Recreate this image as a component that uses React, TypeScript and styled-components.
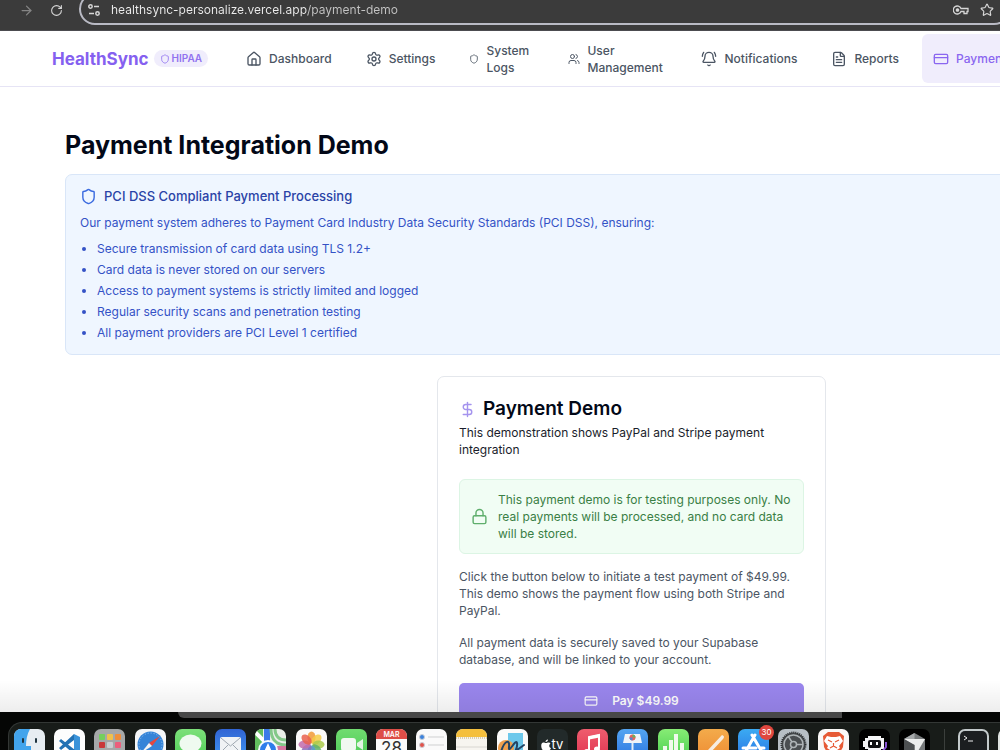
import React from "react";
import styled, { createGlobalStyle } from "styled-components";
import {
  ArrowRight,
  BellRing,
  CreditCard,
  DollarSign,
  FileText,
  House,
  Lock,
  RotateCw,
  Settings,
  Shield,
  Star,
  Users,
} from "lucide-react";

const GlobalStyle = createGlobalStyle`
  *, *::before, *::after { box-sizing: border-box; }
  body {
    margin: 0;
    background: #000;
    color: #020817;
    font-family: Inter, "Liberation Sans", sans-serif;
    font-size: 12px;
    line-height: 17px;
  }
  h1, h2, h3, p, ul { margin: 0; padding: 0; }
  svg { flex: none; display: block; }
`;

const Desktop = styled.div`
  height: 100vh;
  display: flex;
  flex-direction: column;
  overflow: hidden;
`;

/* Browser chrome */
const BrowserBar = styled.div`
  flex: none;
  height: 31px;
  display: flex;
  align-items: flex-end;
  gap: 16px;
  padding: 0 0 5px 19px;
  background: #3b3b3b;
  border-bottom: 1px solid #4c4c50;
  overflow: hidden;
`;

const BarButton = styled.button<{ $dim?: boolean }>`
  flex: none;
  display: flex;
  align-items: center;
  height: 30px;
  padding: 0;
  border: 0;
  background: none;
  color: ${(p) => (p.$dim ? "#858585" : "#d6d6d6")};
`;

const AddressPill = styled.div`
  flex: 1;
  display: flex;
  align-items: center;
  gap: 11px;
  height: 32px;
  margin-right: -10px;
  padding: 2px 14px 0 7px;
  border: 2px solid #b9bac4;
  border-radius: 16px;
  color: #d6d6d6;
`;

/* The host name is brighter than the path that follows it. */
const AddressInput = styled.input`
  flex: 1;
  min-width: 0;
  height: 18px;
  padding: 0;
  border: 0;
  outline: 0;
  background: linear-gradient(90deg, #ededed 197px, #c4c4c4 197px);
  background-clip: text;
  -webkit-background-clip: text;
  color: transparent;
  font: 400 12px/18px Inter, "Liberation Sans", sans-serif;
`;

/* Application */
const Viewport = styled.div`
  position: relative;
  flex: 1;
  min-height: 0;
  overflow: hidden;
  background: #fff;
  &::after {
    content: "";
    position: absolute;
    inset: auto 0 0 0;
    height: 32px;
    background: linear-gradient(rgba(0, 0, 0, 0), rgba(0, 0, 0, 0.07));
    pointer-events: none;
  }
`;

const Header = styled.header`
  display: flex;
  align-items: center;
  height: 56px;
  padding-left: 52px;
  border-bottom: 1px solid #e6e4f5;
`;

const Brand = styled.a`
  flex: none;
  font-size: 17px;
  line-height: 24px;
  font-weight: 700;
  color: #8560f0;
  text-decoration: none;
`;

const HipaaBadge = styled.span`
  flex: none;
  display: flex;
  align-items: center;
  gap: 2px;
  height: 17px;
  margin: 0 27px 0 5px;
  padding: 0 6px;
  border-radius: 9px;
  background: #f0edfc;
  color: #9273f0;
  font-size: 10px;
  font-weight: 600;
`;

const Nav = styled.nav`
  display: flex;
  align-items: center;
  gap: 12px;
`;

const NavLink = styled.a<{ $active?: boolean }>`
  flex: none;
  display: flex;
  align-items: center;
  gap: 7px;
  min-height: 49px;
  padding: 0 11px;
  border-radius: 6px;
  background: ${(p) => (p.$active ? "#f0edfc" : "transparent")};
  color: ${(p) => (p.$active ? "#8a66f0" : "#4b5563")};
  font-weight: 500;
  text-decoration: none;
`;

const NavLabel = styled.span<{ $width?: number }>`
  width: ${(p) => (p.$width ? `${p.$width}px` : "auto")};
`;

/* The content column is wider than the window and runs past its right edge. */
const Main = styled.main`
  margin-right: -263px;
  padding: 42px 65px 0;
`;

const PageTitle = styled.h1`
  font-size: 25px;
  line-height: 32px;
  font-weight: 700;
`;

const Notice = styled.section`
  margin: 13px 0 21px;
  padding: 11px 14px 13px;
  border: 1px solid #d9e6f8;
  border-radius: 7px;
  background: #eff6ff;
  color: #3452c6;
`;

const NoticeTitle = styled.h2`
  display: flex;
  align-items: center;
  gap: 7px;
  padding-bottom: 8px;
  font-size: 13px;
  line-height: 20px;
  font-weight: 500;
  color: #2a43a6;
  svg { color: #3b6be0; }
`;

const NoticeList = styled.ul`
  display: flex;
  flex-direction: column;
  gap: 4px;
  padding: 9px 0 0 17px;
`;

const Card = styled.section`
  width: 389px;
  margin: 0 auto;
  padding: 20px 21px;
  border: 1px solid #e4e7ec;
  border-radius: 7px;
  background: #fff;
`;

const CardTitle = styled.h2`
  display: flex;
  align-items: center;
  gap: 7px;
  padding-bottom: 3px;
  font-size: 19px;
  line-height: 24px;
  font-weight: 600;
  svg { color: #a594ee; }
`;

const CardText = styled.p<{ $strong?: boolean }>`
  padding-bottom: 15px;
  color: ${(p) => (p.$strong ? "#1a1d2b" : "#4b5563")};
`;

const TestAlert = styled.div`
  display: flex;
  align-items: center;
  gap: 10px;
  margin: 6px 0 14px;
  padding: 11px;
  border: 1px solid #dcf5e4;
  border-radius: 6px;
  background: #f1fdf4;
  color: #3a7f45;
  svg { color: #5fae6c; }
`;

const PayButton = styled.button`
  display: flex;
  align-items: center;
  justify-content: center;
  gap: 14px;
  width: 100%;
  height: 35px;
  border: 0;
  border-radius: 5px;
  background: #9a86ee;
  color: #fff;
  font: 600 12px/17px Inter, "Liberation Sans", sans-serif;
`;

/* Desktop edge and dock */
const DockArea = styled.footer`
  flex: none;
  height: 38px;
  overflow: hidden;
  background: #050605;
`;

const WindowEdge = styled.div`
  height: 6px;
  margin: 0 158px 4px 178px;
  border-radius: 0 0 0 6px;
  background: #484848;
`;

const Dock = styled.div`
  display: flex;
  height: 60px;
  margin-left: 8px;
  padding: 6px 0 0 5px;
  border: 1px solid #333735;
  border-right: 0;
  border-radius: 14px 0 0 0;
  background: #181c19;
`;

const DockApps = styled.div`
  flex: 1;
  display: flex;
  justify-content: space-between;
`;

const DockTail = styled.div`
  flex: none;
  display: flex;
  gap: 9px;
  width: 56px;
  margin-left: 14px;
  padding-left: 13px;
  border-left: 1px solid #3b3f3c;
`;

const AppTile = styled.div<{ $bg: string }>`
  position: relative;
  flex: none;
  width: 31px;
  height: 31px;
  border-radius: 7px;
  background: ${(p) => p.$bg};
  > svg { width: 31px; height: 31px; border-radius: 7px; }
`;

const CountBadge = styled.span`
  position: absolute;
  top: -4px;
  right: -5px;
  width: 15px;
  height: 15px;
  border-radius: 50%;
  background: #e0473f;
  color: #fff;
  font-size: 8px;
  line-height: 15px;
  text-align: center;
`;

const CalendarFace = styled.div`
  overflow: hidden;
  height: 31px;
  border-radius: 7px;
  color: #333;
  font-size: 17px;
  line-height: 18px;
  text-align: center;
`;

const CalendarMonth = styled.div`
  height: 10px;
  background: #dd4e48;
  color: #fff;
  font-size: 7px;
  line-height: 11px;
  font-weight: 600;
`;

const TvLabel = styled.div`
  display: flex;
  align-items: center;
  justify-content: center;
  height: 31px;
  color: #fff;
  font-size: 13px;
  > svg { width: 10px; height: 12px; }
`;

const Art = ({ children }: { children: React.ReactNode }) => (
  <svg viewBox="0 0 31 31" fill="none" aria-hidden="true">
    {children}
  </svg>
);

const petals = ["#f19a37", "#f4cb45", "#a9c94b", "#62b26b", "#5b9bd0", "#8670bd", "#c26bac", "#e9604e"];

const apps: { name: string; bg: string; face: React.ReactNode; count?: number }[] = [
  {
    name: "Finder",
    bg: "#e7edf2",
    face: (
      <Art>
        <path d="M0 0h16c-3 5-4 11-4 17h5v14H0z" fill="#42a4ec" />
        <path d="M9 10v3M22 10v3" stroke="#20343f" strokeWidth="2" strokeLinecap="round" />
      </Art>
    ),
  },
  {
    name: "VS Code",
    bg: "#fdfdfd",
    face: (
      <Art>
        <path d="M20 5l6 3v16l-6 3z" fill="#3a93da" />
        <path d="M5 12l2-2 14 11v5zM5 19l15-14v6L7 21z" fill="#2372b4" />
      </Art>
    ),
  },
  {
    name: "Launchpad",
    bg: "#a5a7a8",
    face: (
      <Art>
        {["#74cf5d", "#f0c14c", "#ee8d3b", "#c9373a", "#c9cdd0", "#ec5e7c", "#6187cc", "#a56bc0", "#58b8d8"].map((c, i) => (
          <rect key={c} x={5 + (i % 3) * 8} y={5 + Math.floor(i / 3) * 8} width="6" height="6" rx="1" fill={c} />
        ))}
      </Art>
    ),
  },
  {
    name: "Safari",
    bg: "#f5f6f7",
    face: (
      <Art>
        <circle cx="15.500" cy="15.500" r="13" fill="#3584d8" />
        <circle cx="15.500" cy="15.500" r="11.500" stroke="#9cc8f2" strokeDasharray="1 2" />
        <path d="M25 7L14 14l3 3z" fill="#e4473e" />
        <path d="M6 24l8-10 3 3z" fill="#f4f4f4" />
      </Art>
    ),
  },
  {
    name: "Messages",
    bg: "linear-gradient(#7de07a, #4fce57)",
    face: (
      <Art>
        <ellipse cx="15.500" cy="14.500" rx="11" ry="9" fill="#effaf0" />
        <path d="M8 20l-1 5 6-3z" fill="#effaf0" />
      </Art>
    ),
  },
  {
    name: "Mail",
    bg: "linear-gradient(#3164d4, #3f98f2)",
    face: (
      <Art>
        <rect x="5" y="8" width="21" height="16" rx="2" fill="#f0f2f5" />
        <path d="M6 9l9.500 8L25 9M6 23l7-7M25 23l-7-7" stroke="#9fa7b1" />
      </Art>
    ),
  },
  {
    name: "Maps",
    bg: "#e9eee8",
    face: (
      <Art>
        <path d="M0 0h8v31H0z" fill="#62bd5e" />
        <path d="M0 3l20 20" stroke="#fff" strokeWidth="4" />
        <path d="M12 0v14" stroke="#3c7ae8" strokeWidth="6" />
        <path d="M20 0c0 7 4 11 11 11M16 0c0 11 6 16 15 16" stroke="#83c889" strokeWidth="3" />
        <path d="M22 31V17h9v14z" fill="#d6759f" />
        <circle cx="13" cy="21" r="9" fill="#2e7deb" stroke="#f5f9fd" strokeWidth="2" />
        <path d="M13 14l5 11-5-3-5 3z" fill="#fff" />
      </Art>
    ),
  },
  {
    name: "Photos",
    bg: "#fbfbfa",
    face: (
      <Art>
        {petals.map((c, i) => (
          <ellipse key={c} cx="15.500" cy="8.500" rx="4" ry="6" fill={c} fillOpacity="0.85" transform={`rotate(${i * 45} 15.5 15.5)`} />
        ))}
      </Art>
    ),
  },
  {
    name: "FaceTime",
    bg: "linear-gradient(#70dc70, #4bca55)",
    face: (
      <Art>
        <rect x="5" y="9" width="15" height="13" rx="3" fill="#f0f8f0" />
        <path d="M21 14l6-4v11l-6-4z" fill="#e2f3e3" />
      </Art>
    ),
  },
  {
    name: "Calendar",
    bg: "#fbfbfa",
    face: (
      <CalendarFace>
        <CalendarMonth>MAR</CalendarMonth>28
      </CalendarFace>
    ),
  },
  {
    name: "Reminders",
    bg: "#fafafa",
    face: (
      <Art>
        {["#3b82dc", "#e0524a", "#e99b3e"].map((c, i) => (
          <g key={c}>
            <circle cx="6" cy={8 + i * 8} r="2.500" fill={c} stroke="#c9ced6" />
            <path d={`M12 ${8 + i * 8}h16`} stroke="#cfd0d1" />
          </g>
        ))}
      </Art>
    ),
  },
  {
    name: "Notes",
    bg: "#f7f5f0",
    face: (
      <Art>
        <path d="M0 0h31v8H0z" fill="#f4bf3d" />
        <path d="M0 9h31" stroke="#bba979" strokeDasharray="1 1" />
        <path d="M0 18h31" stroke="#d8d6d1" />
      </Art>
    ),
  },
  {
    name: "Freeform",
    bg: "#fbfbfa",
    face: (
      <Art>
        <path d="M11 4h15v22H11z" fill="#6dc8eb" />
        <circle cx="9" cy="19" r="8" fill="#efa04d" />
        <path d="M4 23c3-11 9-14 8-5-1 8 7-9 8-4 1 5-3 8 0 7l7-5" stroke="#234564" strokeWidth="2" strokeLinecap="round" />
      </Art>
    ),
  },
  {
    name: "TV",
    bg: "#222a2a",
    face: (
      <TvLabel>
        <svg viewBox="0 0 20 24" fill="#fff" aria-hidden="true">
          <path d="M14 1c0 3-2 5-5 5 0-3 2-5 5-5zM10 8c2 0 3-1 5-1 2 0 3 1 4 2-4 3-3 8 1 9-1 3-3 5-5 5-2 0-3-1-5-1s-3 1-5 1C0 21-2 7 5 7c2 0 3 1 5 1z" />
        </svg>
        tv
      </TvLabel>
    ),
  },
  {
    name: "Music",
    bg: "linear-gradient(#ef5c6e, #e03450)",
    face: (
      <Art>
        <path d="M12 22V8l10-2v13" stroke="#fff" strokeWidth="2" />
        <path d="M12 9l10-2" stroke="#fff" strokeWidth="3" />
        <ellipse cx="10" cy="22.500" rx="3" ry="2.500" fill="#fff" />
        <ellipse cx="20" cy="20" rx="3" ry="2.500" fill="#fff" />
      </Art>
    ),
  },
  {
    name: "Keynote",
    bg: "linear-gradient(#54a5f1, #2a74df)",
    face: (
      <Art>
        <path d="M8 5h15l2 9H6z" fill="#eef3f8" />
        <path d="M15.500 14v11M10 25h11" stroke="#e3edf7" strokeWidth="2" />
        <circle cx="15.500" cy="8.500" r="3" fill="#e8605c" />
        <path d="M15.500 8.500v-3a3 3 0 0 1 3 3z" fill="#65b35d" />
        <path d="M15.500 8.500h-3a3 3 0 0 0 3 3z" fill="#5682cf" />
      </Art>
    ),
  },
  {
    name: "Numbers",
    bg: "linear-gradient(#87ec75, #49ce50)",
    face: (
      <Art>
        <path d="M5 17h4v9H5zM11 11h4v15h-4zM16 5h4v21h-4zM22 14h4v12h-4z" fill="#f0faed" />
      </Art>
    ),
  },
  {
    name: "Pages",
    bg: "linear-gradient(#f3ab4b, #ee8b32)",
    face: (
      <Art>
        <path d="M24 6c3 1 2 3 1 4L13 23l-6 3 3-5z" fill="#f6ede1" />
        <path d="M6 26h15" stroke="#f8dfbd" strokeWidth="2" />
      </Art>
    ),
  },
  {
    name: "App Store",
    bg: "linear-gradient(#3baaf2, #2975e4)",
    count: 30,
    face: (
      <Art>
        <path d="M17 6L8 22M14 6l10 17M5 19h13M22 19h4" stroke="#fff" strokeWidth="3" strokeLinecap="round" />
      </Art>
    ),
  },
  {
    name: "System Settings",
    bg: "#b7bfc5",
    face: (
      <Art>
        <circle cx="15.500" cy="15.500" r="12" fill="#4a4e51" stroke="#2d3032" strokeWidth="2" strokeDasharray="1 1" />
        <circle cx="15.500" cy="15.500" r="9.500" stroke="#aeb4b7" strokeWidth="1.500" />
        <circle cx="15.500" cy="15.500" r="3" stroke="#aeb4b7" strokeWidth="1.500" />
        <path d="M14 13L10 7M18.500 15.500H25M14 18l-4 6" stroke="#aeb4b7" strokeWidth="1.500" />
      </Art>
    ),
  },
  {
    name: "Brave",
    bg: "#faf8f7",
    face: (
      <Art>
        <path d="M10 3h11l5 4-1 11-4 7-5.500 4L10 25l-4-7L5 7z" fill="#e65a35" />
        <path d="M9 7l4 1h5l4-1 3 5-4 5 1 2-3 2-3.500 4L12 21l-3-2 1-2-4-5z" fill="#fff" />
        <path d="M10 11l4 2M21 11l-4 2M15.500 14v3M12 19l3.500-2 3.500 2" stroke="#e65a35" strokeWidth="1.200" />
      </Art>
    ),
  },
  {
    name: "Robot",
    bg: "#000",
    face: (
      <Art>
        <path d="M9 7h13v2h3v11h-3v2H9v-2H6v-2H4v-6h2V9h3z" fill="#f4f4f6" />
        <rect x="9" y="11" width="13" height="8" rx="2" fill="#101013" />
        <path d="M12 13v3M18 13v3" stroke="#fff" strokeWidth="2" />
        <path d="M27 13v5l-4 5" stroke="#8551d0" strokeWidth="2" />
      </Art>
    ),
  },
  {
    name: "Cursor",
    bg: "#000",
    face: (
      <Art>
        <path d="M15.500 4L26 10v12l-10.500 6L5 22V10z" fill="#777a7c" />
        <path d="M15.500 4L5 10l10.500 6z" fill="#a5a8aa" />
        <path d="M5 10h21L15.500 28V16z" fill="#eceded" />
        <path d="M5 10l10.500 6v12L5 22z" fill="#4c4f51" />
      </Art>
    ),
  },
];

const navItems = [
  { label: "Dashboard", icon: <House size={16} /> },
  { label: "Settings", icon: <Settings size={16} /> },
  { label: "System Logs", icon: <Shield size={10} />, width: 48 },
  { label: "User Management", icon: <Users size={12} />, width: 80 },
  { label: "Notifications", icon: <BellRing size={16} /> },
  { label: "Reports", icon: <FileText size={16} /> },
  { label: "Payments", icon: <CreditCard size={16} />, active: true },
];

const guarantees = [
  "Secure transmission of card data using TLS 1.2+",
  "Card data is never stored on our servers",
  "Access to payment systems is strictly limited and logged",
  "Regular security scans and penetration testing",
  "All payment providers are PCI Level 1 certified",
];

export default function App() {
  return (
    <Desktop>
      <GlobalStyle />
      <BrowserBar>
        <BarButton $dim aria-label="Forward"><ArrowRight size={15} /></BarButton>
        <BarButton aria-label="Reload"><RotateCw size={13} /></BarButton>
        <AddressPill>
          <svg width="12" height="12" viewBox="0 0 12 12" fill="none" stroke="currentColor" strokeWidth="1.500" aria-hidden="true">
            <circle cx="2.500" cy="2.500" r="1.700" />
            <path d="M6 2.500h5M1 9.500h5" />
            <circle cx="9.500" cy="9.500" r="1.700" />
          </svg>
          <AddressInput aria-label="Address" defaultValue="healthsync-personalize.vercel.app/payment-demo" />
          <svg width="16" height="10" viewBox="0 0 16 10" fill="none" stroke="currentColor" strokeWidth="1.300" aria-hidden="true">
            <path d="M8 3.500a4 4 0 1 0 0 3h3v2h3v-2h1v-3z" />
            <circle cx="4.500" cy="5" r="1.200" fill="currentColor" />
          </svg>
          <Star size={14} />
        </AddressPill>
      </BrowserBar>

      <Viewport>
        <Header>
          <Brand href="#">HealthSync</Brand>
          <HipaaBadge><Shield size={10} />HIPAA</HipaaBadge>
          <Nav>
            {navItems.map((item) => (
              <NavLink key={item.label} href="#" $active={item.active}>
                {item.icon}
                <NavLabel $width={item.width}>{item.label}</NavLabel>
              </NavLink>
            ))}
          </Nav>
        </Header>

        <Main>
          <PageTitle>Payment Integration Demo</PageTitle>
          <Notice>
            <NoticeTitle><Shield size={17} />PCI DSS Compliant Payment Processing</NoticeTitle>
            <p>Our payment system adheres to Payment Card Industry Data Security Standards (PCI DSS), ensuring:</p>
            <NoticeList>
              {guarantees.map((text) => <li key={text}>{text}</li>)}
            </NoticeList>
          </Notice>

          <Card>
            <CardTitle><DollarSign size={17} />Payment Demo</CardTitle>
            <CardText $strong>This demonstration shows PayPal and Stripe payment integration</CardText>
            <TestAlert>
              <Lock size={17} />
              <p>This payment demo is for testing purposes only. No real payments will be processed, and no card data will be stored.</p>
            </TestAlert>
            <CardText>Click the button below to initiate a test payment of $49.99. This demo shows the payment flow using both Stripe and PayPal.</CardText>
            <CardText>All payment data is securely saved to your Supabase database, and will be linked to your account.</CardText>
            <PayButton type="button"><CreditCard size={14} />Pay $49.99</PayButton>
          </Card>
        </Main>
      </Viewport>

      <DockArea>
        <WindowEdge />
        <Dock>
          <DockApps>
            {apps.map((app) => (
              <AppTile key={app.name} $bg={app.bg} role="img" aria-label={app.name}>
                {app.face}
                {app.count && <CountBadge>{app.count}</CountBadge>}
              </AppTile>
            ))}
          </DockApps>
          <DockTail>
            <AppTile $bg="#c3cacb" role="img" aria-label="Terminal">
              <Art>
                <rect x="2" y="2" width="27" height="27" rx="5" fill="#1b1e20" />
                <path d="M6 7l3 2-3 2M10 12h5" stroke="#eee" />
              </Art>
            </AppTile>
            <AppTile $bg="#dfe3e0" />
          </DockTail>
        </Dock>
      </DockArea>
    </Desktop>
  );
}
